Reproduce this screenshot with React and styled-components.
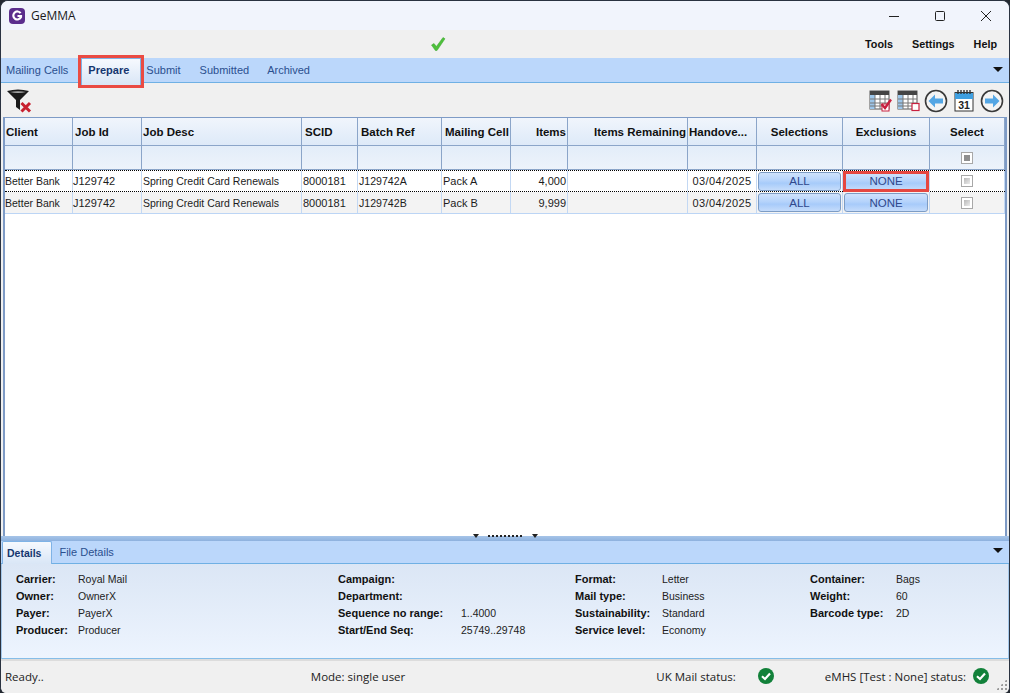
import React from "react";
import styled, { createGlobalStyle } from "styled-components";

const Global = createGlobalStyle`
  html, body { margin: 0; padding: 0; background: #232830; }
  #root { width: 1010px; height: 693px; overflow: hidden; }
  * { box-sizing: border-box; }
`;

const Win = styled.div`
  width: 1010px; height: 693px; display: flex; flex-direction: column;
  background: #f0f0f0; border-radius: 8px 8px 6px 6px; overflow: hidden;
  border: 1px solid #2a3240; border-bottom: none;
  font: 11px "Liberation Sans", Arial, sans-serif; color: #111;
`;
const TitleBar = styled.div`
  height: 29px; flex: none; display: flex; align-items: center; padding-left: 8px;
  background: #f1f4fc;
`;
const AppName = styled.span`
  font: 12px "Open Sans", sans-serif; margin-left: 6px; color: #1a1a1a;
`;
const WinControls = styled.div`
  margin-left: auto; display: flex; align-items: center;
`;
const WinBtn = styled.div`
  width: 46px; height: 29px; display: flex; align-items: center; justify-content: center;
`;
const MenuBar = styled.div`
  height: 28px; flex: none; display: flex; align-items: center; position: relative; background: #f0f0f0;
`;
const StatusTick = styled.div`
  width: 100%; display: flex; justify-content: center; padding-right: 134px;
`;
const Menu = styled.nav`
  display: flex; flex: none; gap: 19px; padding-right: 12px; position: absolute; right: 0; top: 8px;
`;
const MenuItem = styled.span`
  font-weight: 700; font-size: 10.8px; color: #111;
`;
const TabStrip = styled.div`
  height: ${p => p.$h}px; flex: none; display: flex; align-items: flex-end; position: relative;
  background: #bbd7fb; border-bottom: 1px solid #6fb0e4;
`;
const Tab = styled.div`
  display: flex; align-items: center; font-size: ${p => p.$size || 11}px;
  margin-left: ${p => p.$ml || 0}px;
  padding: 0 ${p => p.$pr || 0}px ${p => p.$pb || 0}px ${p => p.$pl || 0}px;
  height: ${p => p.$h || 24}px;
  margin-bottom: ${p => p.$over ? -p.$over : 0}px;
  color: ${p => (p.$active ? "#15366f" : "#2a4f8f")};
  font-weight: ${p => (p.$active ? 700 : 400)};
  ${p => p.$active && `
    position: relative; z-index: 1;
    background: linear-gradient(#f6f9fe, #d9e6f6);
    border: 1px solid #7fb3e6; border-bottom: none; border-radius: 2px 2px 0 0;
  `}
  ${p => p.$marked && "outline: 3px solid #ea4b43; border-radius: 0; z-index: 2;"}
`;
const Caret = styled.div`
  position: absolute; right: 6px; top: ${p => p.$top}px; width: 0; height: 0;
  border-left: 5px solid transparent; border-right: 5px solid transparent; border-top: 5px solid #111;
`;
const Toolbar = styled.div`
  height: 34px; flex: none; display: flex; align-items: center; justify-content: space-between;
  padding: 2px 5px 0 5px; background: #f0f0f0;
`;
const ToolGroup = styled.div`
  display: flex; align-items: center;
`;
const ToolSlot = styled.div`
  display: flex; margin-left: ${p => p.$ml || 0}px;
`;
const GridArea = styled.div`
  flex: 1; min-height: 0; margin: 0 2px; background: #fff;
  border-left: 2px solid #7e9bc6; border-right: 2px solid #7e9bc6; border-top: 1px solid #7e9bc6;
`;
const cols = "68px 69px 160px 56px 84px 69px 57px 120px 69px 86px 87px 1fr";
const GridRow = styled.div`
  display: grid; grid-template-columns: ${cols};
  height: ${p => p.$h}px;
  background: ${p => p.$bg};
  ${p => p.$focus && "border-top: 1px dotted #000; border-bottom: 1px dotted #000;"}
  ${p => p.$last && "border-bottom: 1px solid #bcd5f5;"}
`;
const HeadCell = styled.div`
  display: flex; align-items: center; padding: 0 1px 0 ${p => p.$pl || 1}px;
  justify-content: ${p => p.$align || "flex-start"};
  font-weight: 700; font-size: 11.5px; color: #111;
  border-right: 1px solid #8ba5c9; border-bottom: 1px solid #8ba5c9;
  white-space: nowrap; overflow: hidden;
`;
const Cell = styled.div`
  display: flex; align-items: center; padding: 0 1px 0 ${p => p.$pl ?? 1}px;
  justify-content: ${p => p.$align || "flex-start"};
  font-size: ${p => p.$size || 11}px; letter-spacing: ${p => p.$track || 0}px;
  color: #1c1c1c; border-right: 1px solid #c3d8f3; white-space: nowrap;
`;
const CellBtn = styled.div`
  width: 100%; height: 19px; display: flex; align-items: center; justify-content: center;
  border: 1px solid #7d9cc4; border-radius: 3px; color: #30488c; font-size: 11.5px; letter-spacing: 0;
  background: linear-gradient(#cfe2fc 0%, #b5d3fb 45%, #a7cbfa 60%, #c5dcfb 100%);
  ${p => p.$marked && "outline: 3px solid #e64740; outline-offset: -2px; border-radius: 0;"}
`;
const Check = styled.div`
  width: 12px; height: 12px; border: 1px solid #a8a8a8; padding: 2px; background: #fff;
  display: flex;
`;
const CheckFill = styled.div`
  flex: 1; background: ${p => (p.$mixed ? "#8f8f8f" : "linear-gradient(135deg,#b8b8b8,#ececec)")};
`;
const Splitter = styled.div`
  height: 5px; flex: none; display: flex; align-items: flex-start; justify-content: center;
  background: linear-gradient(#a6c4e8, #8db1de);
`;
const SplitGrip = styled.div`
  display: flex; align-items: center; height: 4px; gap: 9px; margin-top: -2px; position: relative;
`;
const Dots = styled.div`
  width: 35px; height: 2px; background: repeating-linear-gradient(90deg,#222 0 2px,transparent 2px 4px);
`;
const Tri = styled.div`
  width: 0; height: 0; border-left: 3px solid transparent; border-right: 3px solid transparent; border-top: 4px solid #222;
`;
const DetailGrid = styled.div`
  height: 95px; flex: none; padding: 6px 0 0 14px;
  display: grid; grid-template-columns: 62px 260px 123px 114px 87px 148px 86px 1fr;
  grid-auto-rows: 17px; align-items: center;
  background: linear-gradient(#dbe6f5, #edf4fe);
  border-bottom: 1px solid #85bde8; border-left: 1px solid #a5c8ea; border-right: 1px solid #a5c8ea;
`;
const Label = styled.span`
  font-weight: 700; font-size: 11px; color: #111; white-space: nowrap;
`;
const Value = styled.span`
  font-size: 10.5px; color: #222; white-space: nowrap;
`;
const StatusBar = styled.div`
  height: 34px; flex: none; display: flex; align-items: center; position: relative;
  padding: 0 24px 2px 4px; border-top: 2px solid #dcdcdc; background: #f0f0f0;
  font: 12px "Open Sans", sans-serif; color: #222;
`;
const Seg = styled.div`
  display: flex; align-items: center; gap: ${p => p.$gap || 0}px;
  margin-left: ${p => p.$ml || 0}px;
`;
const StatusText = styled.span` font-size: 11.5px; white-space: nowrap; `;
const Grip = styled.div`
  position: absolute; right: 2px; bottom: 3px; width: 11px; height: 11px;
  background-image: radial-gradient(#9a9a9a 1px, transparent 1.2px); background-size: 4px 4px;
  clip-path: polygon(100% 0, 100% 100%, 0 100%);
`;

const Logo = () => (
  <svg width="16" height="16" viewBox="0 0 16 16">
    <rect width="16" height="16" rx="4" fill="#5b2d8c" />
    <path d="M11.6 5.2 A4 4 0 1 0 12 9 V8 H8.5" fill="none" stroke="#fff" strokeWidth="2.2" />
  </svg>
);
const GreenTick = () => (
  <svg width="16" height="16" viewBox="0 0 16 16">
    <path d="M1.5 9 L4 7.5 L6.4 10.5 L13 1.5 L15 2.8 L7 14.5 L5.4 14.5 Z" fill="#4ec03c" stroke="#3aa52c" strokeWidth=".5" />
  </svg>
);
const Funnel = () => (
  <svg width="26" height="24" viewBox="0 0 26 24">
    <path d="M1 2 Q12 -1 23 2 L14 11 V21 L10 18 V11 Z" fill="#1a1a1a" />
    <path d="M4 3 Q12 1.5 20 3 Q12 5 4 3 Z" fill="#aaa" />
    <path d="M15.5 14 L24 22.5 M24 14 L15.5 22.5" stroke="#c8202f" strokeWidth="3" />
  </svg>
);
const TableIcon = ({ checked }) => (
  <svg width="24" height="22" viewBox="0 0 24 22">
    <rect x="1" y="1" width="19" height="18" fill="#fff" stroke="#555" />
    <rect x="1" y="1" width="19" height="4" fill="#444" />
    <rect x="1" y="5" width="5" height="14" fill="#9cc6ea" />
    <path d="M6 5V19M11 5V19M16 5V19M1 9H20M1 13H20M1 16H20" stroke="#777" strokeWidth="1" fill="none" />
    {checked ? (
      <>
        <rect x="13" y="14" width="7" height="7" fill="#fff" stroke="#c8203f" />
        <path d="M12.5 14 L16 18 L22 9.5" fill="none" stroke="#c8203f" strokeWidth="2.4" />
      </>
    ) : (
      <rect x="15" y="13.5" width="7" height="7" fill="#fff" stroke="#c8203f" strokeWidth="1.2" />
    )}
  </svg>
);
const ArrowIcon = ({ dir }) => (
  <svg width="24" height="24" viewBox="0 0 24 24" style={{ transform: dir === "right" ? "scaleX(-1)" : "none" }}>
    <circle cx="12" cy="12" r="10.5" fill="#f4f4f4" stroke="#3a3a3a" strokeWidth="1.6" />
    <path d="M11 5.5 L4.5 12 L11 18.5 V14.5 H19 V9.5 H11 Z" fill="#54a6e4" />
  </svg>
);
const Calendar = () => (
  <svg width="20" height="22" viewBox="0 0 20 22">
    <rect x="1" y="2.5" width="18" height="18.5" fill="#fff" stroke="#333" />
    <rect x="1" y="3" width="18" height="6" fill="#3f9fe0" />
    <path d="M4 0V4M7 0V4M10 0V4M13 0V4M16 0V4" stroke="#333" strokeWidth="1.4" />
    <text x="10" y="19" textAnchor="middle" fontSize="10.5" fontWeight="700" fontFamily="Liberation Sans" fill="#222">31</text>
  </svg>
);
const OkBadge = () => (
  <svg width="16" height="16" viewBox="0 0 16 16">
    <circle cx="8" cy="8" r="8" fill="#12813a" />
    <path d="M4 8.3 L7 11 L12 5.6" fill="none" stroke="#fff" strokeWidth="2.2" />
  </svg>
);
const Min = () => <svg width="12" height="12"><path d="M1 6.5H11" stroke="#222" /></svg>;
const Max = () => <svg width="12" height="12"><rect x="1.5" y="1.5" width="9" height="9" rx="1" fill="none" stroke="#222" /></svg>;
const Close = () => <svg width="12" height="12"><path d="M1 1L11 11M11 1L1 11" stroke="#222" /></svg>;

const heads = [
  { t: "Client" }, { t: "Job Id", pl: 2 }, { t: "Job Desc" }, { t: "SCID", pl: 3 }, { t: "Batch Ref", pl: 3 }, { t: "Mailing Cell", pl: 3 },
  { t: "Items", a: "flex-end" }, { t: "Items Remaining", a: "flex-end" }, { t: "Handove..." },
  { t: "Selections", a: "center" }, { t: "Exclusions", a: "center" }, { t: "Select", a: "center" },
];
const rows = [
  { batch: "J129742A", pack: "Pack A", items: "4,000", focus: true },
  { batch: "J129742B", pack: "Pack B", items: "9,999" },
];
const details = [
  ["Carrier:", "Royal Mail", "Campaign:", "", "Format:", "Letter", "Container:", "Bags"],
  ["Owner:", "OwnerX", "Department:", "", "Mail type:", "Business", "Weight:", "60"],
  ["Payer:", "PayerX", "Sequence no range:", "1..4000", "Sustainability:", "Standard", "Barcode type:", "2D"],
  ["Producer:", "Producer", "Start/End Seq:", "25749..29748", "Service level:", "Economy", "", ""],
];

export default function App() {
  return (
    <>
      <Global />
      <Win>
        <TitleBar>
          <Logo />
          <AppName>GeMMA</AppName>
          <WinControls>
            <WinBtn><Min /></WinBtn>
            <WinBtn><Max /></WinBtn>
            <WinBtn><Close /></WinBtn>
          </WinControls>
        </TitleBar>
        <MenuBar>
          <StatusTick><GreenTick /></StatusTick>
          <Menu>
            <MenuItem>Tools</MenuItem>
            <MenuItem>Settings</MenuItem>
            <MenuItem>Help</MenuItem>
          </Menu>
        </MenuBar>
        <TabStrip $h={25}>
          <Tab $ml={5}>Mailing Cells</Tab>
          <Tab $active $marked $ml={13} $pl={6} $pr={11} $h={27} $over={3} $pb={4}>Prepare</Tab>
          <Tab $ml={5}>Submit</Tab>
          <Tab $ml={19}>Submitted</Tab>
          <Tab $ml={18}>Archived</Tab>
          <Caret $top={9} />
        </TabStrip>
        <Toolbar>
          <Funnel />
          <ToolGroup>
            <ToolSlot><TableIcon checked /></ToolSlot>
            <ToolSlot $ml={4}><TableIcon /></ToolSlot>
            <ToolSlot $ml={3}><ArrowIcon /></ToolSlot>
            <ToolSlot $ml={6}><Calendar /></ToolSlot>
            <ToolSlot $ml={6}><ArrowIcon dir="right" /></ToolSlot>
          </ToolGroup>
        </Toolbar>
        <GridArea>
          <GridRow $h={28} $bg="linear-gradient(#f0f5fc,#dde9f8)">
            {heads.map(h => <HeadCell key={h.t} $align={h.a} $pl={h.pl}>{h.t}</HeadCell>)}
          </GridRow>
          <GridRow $h={24} $bg="linear-gradient(#e3edf9,#edf3fb)">
            {heads.map((h, i) => (
              <HeadCell key={h.t} $align="center">
                {i === 11 && <Check><CheckFill $mixed /></Check>}
              </HeadCell>
            ))}
          </GridRow>
          {rows.map((r, i) => (
            <GridRow key={r.batch} $h={22} $bg={i ? "#f3f3f3" : "#fff"} $focus={r.focus} $last={!r.focus}>
              <Cell $size={10.5} $pl={0}>Better Bank</Cell>
              <Cell $pl={0}>J129742</Cell>
              <Cell $size={10.5}>Spring Credit Card Renewals</Cell>
              <Cell>8000181</Cell>
              <Cell $size={10.6}>{r.batch}</Cell>
              <Cell>{r.pack}</Cell>
              <Cell $align="flex-end">{r.items}</Cell>
              <Cell />
              <Cell $align="center" $track={0.4}>03/04/2025</Cell>
              <Cell><CellBtn>ALL</CellBtn></Cell>
              <Cell><CellBtn $marked={r.focus}>NONE</CellBtn></Cell>
              <Cell $align="center"><Check><CheckFill /></Check></Cell>
            </GridRow>
          ))}
        </GridArea>
        <Splitter>
          <SplitGrip><Tri /><Dots /><Tri /></SplitGrip>
        </Splitter>
        <TabStrip $h={23}>
          <Tab $active $ml={1} $pl={4} $pr={10} $size={10.5} $h={23} $over={1}>Details</Tab>
          <Tab $ml={7} $h={22}>File Details</Tab>
          <Caret $top={7} />
        </TabStrip>
        <DetailGrid>
          {details.flat().map((t, i) =>
            i % 2 === 0 ? <Label key={i}>{t}</Label> : <Value key={i}>{t}</Value>
          )}
        </DetailGrid>
        <StatusBar>
          <StatusText>Ready..</StatusText>
          <Seg $ml={267}><StatusText>Mode: single user</StatusText></Seg>
          <Seg $ml={251} $gap={22}><StatusText>UK Mail status:</StatusText><OkBadge /></Seg>
          <Seg $ml={51} $gap={7}><StatusText>eMHS [Test : None] status:</StatusText><OkBadge /></Seg>
          <Grip />
        </StatusBar>
      </Win>
    </>
  );
}
